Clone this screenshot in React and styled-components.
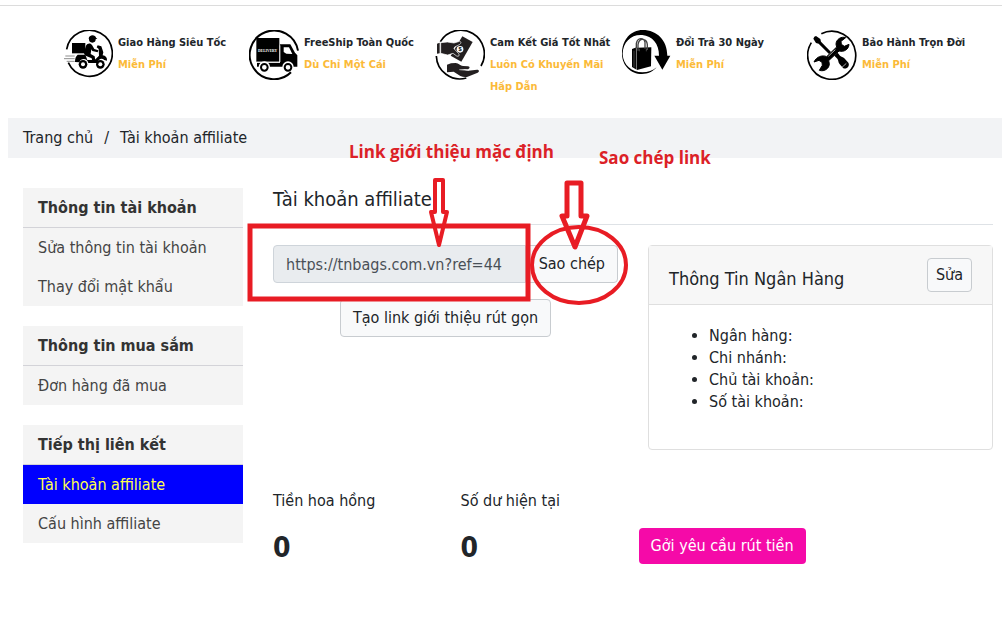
import React from 'react'
import styled, { createGlobalStyle } from 'styled-components'

const GlobalStyle = createGlobalStyle`
    *, *::before, *::after {
        box-sizing: border-box;
    }
    body {
        margin: 0;
        background: #fff;
        color: #212529;
        font-family: "DejaVu Sans Condensed", "DejaVu Sans", sans-serif;
        font-size: 16px;
        line-height: 22px;
    }
    button, input {
        font: inherit;
    }
`

const Page = styled.div`
    position: relative;
    padding: 5px 0 24px 8px;
`
const TopLine = styled.hr`
    margin: 0 0 24px -8px;
    border: 0;
    border-top: 1px solid #dcdcdc;
`

const Features = styled.section`
    display: grid;
    grid-template-columns: repeat(5, 1fr);
    padding: 0 9px 0 55px;
    margin-bottom: 20px;
`
const Feature = styled.div`
    display: flex;
    gap: 5px;
    padding-right: 8px;
`
const FeatureIcon = styled.svg`
    flex: none;
    width: 50px;
    height: 50px;
`
const FeatureText = styled.div`
    padding-top: 2px;
    font-size: 11px;
    font-weight: bold;
`
const FeatureTitle = styled.div`
    white-space: nowrap;
`
const FeatureNote = styled.div`
    color: #fbba39;
`

const Breadcrumb = styled.nav`
    display: flex;
    gap: 11px;
    padding: 9px 15px;
    background: #f2f3f5;
`
const Crumb = styled.a`
    color: #212529;
    text-decoration: none;
`

const Columns = styled.div`
    display: grid;
    grid-template-columns: 220px minmax(0, 1fr);
    gap: 30px;
    padding: 30px 9px 0 15px;
`
const Sidebar = styled.aside`
    display: flex;
    flex-direction: column;
    gap: 20px;
`
const MenuGroup = styled.section`
    background: #f4f4f4;
`
const MenuTitle = styled.h2`
    margin: 0;
    padding: 9px 15px 8px;
    border-bottom: 1px solid #d3d3d8;
    color: #333;
    font-size: 16px;
    font-weight: bold;
`
const MenuLink = styled.a`
    display: block;
    padding: 9px 15px 8px;
    text-decoration: none;
    color: ${(props) => (props.$active ? '#ffff4d' : '#444')};
    background: ${(props) => (props.$active ? '#0000ff' : 'transparent')};
`

const Title = styled.h1`
    margin: 0 0 20px;
    padding-bottom: 14px;
    border-bottom: 1px solid #dee2e6;
    font-size: 20px;
    font-weight: normal;
    line-height: 22px;
`
const Panels = styled.div`
    display: grid;
    grid-template-columns: 1fr 1fr;
    align-items: start;
    gap: 30px;
    margin-bottom: 40px;
`
const LinkBox = styled.div`
    display: flex;
    flex-direction: column;
    align-items: center;
    gap: 16px;
`
const CopyRow = styled.div`
    display: flex;
    width: 100%;
`
const LinkInput = styled.input`
    flex: 1;
    min-width: 0;
    height: 38px;
    padding: 0 12px;
    border: 1px solid #ced4da;
    border-radius: 4px 0 0 4px;
    background: #e9ecef;
    color: #495057;
`
const Button = styled.button`
    padding: ${(props) => (props.$small ? '5px 8px' : '7px 12px')};
    border: 1px solid #c8ccd0;
    border-radius: ${(props) => (props.$joined ? '0 4px 4px 0' : '4px')};
    background: #f8f9fa;
    color: #212529;
    white-space: nowrap;
`

const Card = styled.section`
    border: 1px solid #dfdfdf;
    border-radius: 4px;
`
const CardHead = styled.header`
    display: flex;
    justify-content: space-between;
    align-items: flex-start;
    padding: 12px 20px;
    border-bottom: 1px solid #dfdfdf;
    background: #f7f7f7;
`
const CardTitle = styled.h2`
    margin: 0;
    padding-top: 10px;
    font-size: 18px;
    font-weight: normal;
    line-height: 22px;
`
const BankList = styled.ul`
    margin: 20px 20px 36px;
    padding-left: 40px;
`

const Stats = styled.div`
    display: grid;
    grid-template-columns: repeat(4, minmax(0, 1fr));
    gap: 30px;
`
const StatValue = styled.div`
    margin-top: 20px;
    font-size: 28px;
    font-weight: bold;
    line-height: 32px;
`
const Withdraw = styled.button`
    align-self: end;
    justify-self: end;
    padding: 7px 12px;
    border: 0;
    border-radius: 4px;
    background: #f50aa8;
    color: #fff;
    white-space: nowrap;
`

/* red guide marks drawn over the page */
const Marks = styled.svg`
    position: absolute;
    left: 240px;
    top: 170px;
    width: 400px;
    height: 140px;
    fill: none;
    stroke: #e81c24;
    pointer-events: none;
`
const Note = styled.div`
    position: absolute;
    left: ${(props) => props.$x}px;
    top: ${(props) => props.$y}px;
    color: #dc2127;
    font-family: "Open Sans", "Noto Sans", sans-serif;
    font-size: 17px;
    font-weight: bold;
    line-height: 24px;
    white-space: nowrap;
`

const ScooterIcon = () => (
    <FeatureIcon viewBox="39 30 150 150" aria-hidden="true">
        <path d="M50 88A69 69 0 1 1 55 128" fill="none" stroke="#000" strokeWidth="5" />
        <path d="M46 108h28M42 116h32M50 124h24" stroke="#555" strokeWidth="2" />
        <path d="M66 69h40v31H66z" />
        <circle cx="127" cy="58" r="10" />
        <path d="M116 57c0-15 21-14 22-4l4 4z" />
        <path d="M108 77c4-8 14-9 18-2l7 12 12 4-2 6-16-4-3-5-2 14 12 7 3 20h-9l-3-14-18-8c-5-3-6-8-4-14z" />
        <path d="M73 104h33l6 16h22l13-13-1-20-6-5 3-6 11 3 6 18-2 9c9 1 14 7 13 16l-8-2c-8-8-18-4-21 9h-27c-2-14-22-17-27-2l-13-1c0-10 2-17 8-22z" />
        <circle cx="99" cy="133" r="13" />
        <circle cx="151" cy="133" r="13" />
        <circle cx="99" cy="133" r="6" fill="#fff" />
        <circle cx="151" cy="133" r="6" fill="#fff" />
    </FeatureIcon>
)

const TruckIcon = () => (
    <FeatureIcon viewBox="27 30 150 150" aria-hidden="true">
        <path d="M174 92A73 73 0 1 0 153 157" fill="none" stroke="#000" strokeWidth="6" />
        <path d="M49 54h69v71H49z" />
        <path d="M51 128h69V73h31l14 25 7 8v34H51z" />
        <path d="M131 82h16l10 20-18-1-8-5z" fill="#fff" />
        <path d="M120 76v50M51 127h69" stroke="#fff" strokeWidth="2" />
        <text x="83" y="95" fill="#fff" fontSize="11" fontWeight="bold" textAnchor="middle" fontFamily="Liberation Serif, serif">DELIVERY</text>
        <path d="M56 141a17 17 0 0 1 34 0M127 141a17 17 0 0 1 34 0" fill="#fff" />
        <circle cx="73" cy="142" r="10" fill="#fff" stroke="#000" strokeWidth="6" />
        <circle cx="144" cy="142" r="10" fill="#fff" stroke="#000" strokeWidth="6" />
    </FeatureIcon>
)

const CashIcon = () => (
    <FeatureIcon viewBox="30 30 150 150" aria-hidden="true">
        <path d="M46 65A71 71 0 0 1 168 138M34 108A71 71 0 0 0 124 174" fill="none" stroke="#000" strokeWidth="5" />
        <path d="M112 49l31 17-34 59-32-18z" fill="#231f20" />
        <path d="M36 71l8-3v32l-8 1z" fill="#231f20" />
        <path d="M47 68l20-2 20 3 17-5c6 1 4 7-1 10l-14 7-2 5 14 15c4 5 0 10-6 7l-11-8-16 5-21-5z" fill="#231f20" stroke="#fff" strokeWidth="2" />
        <circle cx="105" cy="88" r="10" fill="#fff" />
        <text x="105" y="94" fontSize="17" fontWeight="bold" textAnchor="middle" fontFamily="Liberation Sans, sans-serif">$</text>
        <path d="M66 134l12-4 14-1c9 0 14 9 22 9l15 1c7 1 6 9-2 9l-22-1 25 5 26-3c7 0 8 6 2 9l-30 12c-7 2-15 1-22-2l-20-13-20 2z" fill="#231f20" />
        <path d="M103 149l24 2c5 0 7-3 6-6" fill="none" stroke="#fff" strokeWidth="2" />
    </FeatureIcon>
)

const ReturnIcon = () => (
    <FeatureIcon viewBox="33 30 150 150" aria-hidden="true">
        <path d="M98 30c44 0 74 32 74 77h9l-24 42-24-42h14c0-36-20-59-50-62C65 42 39 65 38 101c1 35 28 55 59 56 17 0 31-5 43-15-11 13-26 20-44 20-34 0-60-26-60-61 0-42 27-71 62-71z" />
        <path d="M81 83l43-1-1 57-42 11z" />
        <path d="M80 82l-14 5v54l14 8z" />
        <path d="M84 92V74c3-22 26-20 28 0v16M79 86V70c4-18 22-18 26-3v19" fill="none" stroke="#444" strokeWidth="4" />
        <path d="M88 86v8M109 86v8M79 84v66M72 92v50" stroke="#ccc" strokeWidth="1" />
    </FeatureIcon>
)

const ToolsIcon = () => (
    <FeatureIcon viewBox="21 30 150 150" aria-hidden="true">
        <path d="M64 41A72 72 0 1 1 34 68" fill="none" stroke="#000" strokeWidth="5" />
        <path d="M43 50l5-2 13 9 2 8 30 31-6 6-31-31-8-2-8-13z" />
        <path d="M103 107l10-9 7 9c4 3 9 4 13 8l12 13c6 10-6 22-16 16l-11-13c-4-5-2-10-6-15z" />
        <path d="M137 53c-13-5-29 5-29 20l2 8-30 29c-13-6-31 0-38 16l15-5 9 6 1 9-9 15c16 5 30-6 30-20l-2-9 31-29c14 4 29-4 30-20l-14 6-9-6-1-9z" stroke="#000" strokeWidth="3" strokeLinejoin="round" />
        <path d="M126 142l13-12M85 109l21-20" stroke="#fff" strokeWidth="2" />
    </FeatureIcon>
)

const features = [
    { icon: ScooterIcon, title: 'Giao Hàng Siêu Tốc', note: 'Miễn Phí' },
    { icon: TruckIcon, title: 'FreeShip Toàn Quốc', note: 'Dù Chỉ Một Cái' },
    { icon: CashIcon, title: 'Cam Kết Giá Tốt Nhất', note: 'Luôn Có Khuyến Mãi Hấp Dẫn' },
    { icon: ReturnIcon, title: 'Đổi Trả 30 Ngày', note: 'Miễn Phí' },
    { icon: ToolsIcon, title: 'Bảo Hành Trọn Đời', note: 'Miễn Phí' },
]

const menu = [
    { title: 'Thông tin tài khoản', links: ['Sửa thông tin tài khoản', 'Thay đổi mật khẩu'] },
    { title: 'Thông tin mua sắm', links: ['Đơn hàng đã mua'] },
    { title: 'Tiếp thị liên kết', links: ['Tài khoản affiliate', 'Cấu hình affiliate'] },
]

const bankFields = ['Ngân hàng:', 'Chi nhánh:', 'Chủ tài khoản:', 'Số tài khoản:']

const stats = [
    { label: 'Tiền hoa hồng', value: 0 },
    { label: 'Số dư hiện tại', value: 0 },
]

const App = () => {
    const active = 'Tài khoản affiliate'
    const link = 'https://tnbags.com.vn?ref=44'

    return (
        <Page>
            <GlobalStyle />
            <TopLine />
            <Features>
                {features.map(({ icon: Icon, title, note }) => (
                    <Feature key={title}>
                        <Icon />
                        <FeatureText>
                            <FeatureTitle>{title}</FeatureTitle>
                            <FeatureNote>{note}</FeatureNote>
                        </FeatureText>
                    </Feature>
                ))}
            </Features>

            <Breadcrumb>
                <Crumb href="#">Trang chủ</Crumb>
                <span>/</span>
                <span>{active}</span>
            </Breadcrumb>

            <Columns>
                <Sidebar>
                    {menu.map((group) => (
                        <MenuGroup key={group.title}>
                            <MenuTitle>{group.title}</MenuTitle>
                            {group.links.map((name) => (
                                <MenuLink key={name} href="#" $active={name === active}>{name}</MenuLink>
                            ))}
                        </MenuGroup>
                    ))}
                </Sidebar>

                <main>
                    <Title>{active}</Title>
                    <Panels>
                        <LinkBox>
                            <CopyRow>
                                <LinkInput aria-label="Link giới thiệu" readOnly value={link} />
                                <Button type="button" $joined onClick={() => navigator.clipboard?.writeText(link)}>Sao chép</Button>
                            </CopyRow>
                            <Button type="button">Tạo link giới thiệu rút gọn</Button>
                        </LinkBox>
                        <Card>
                            <CardHead>
                                <CardTitle>Thông Tin Ngân Hàng</CardTitle>
                                <Button type="button" $small>Sửa</Button>
                            </CardHead>
                            <BankList>
                                {bankFields.map((field) => <li key={field}>{field}</li>)}
                            </BankList>
                        </Card>
                    </Panels>
                    <Stats>
                        {stats.map((stat) => (
                            <div key={stat.label}>
                                <div>{stat.label}</div>
                                <StatValue>{stat.value}</StatValue>
                            </div>
                        ))}
                        <Withdraw type="button">Gởi yêu cầu rút tiền</Withdraw>
                    </Stats>
                </main>
            </Columns>

            <Marks viewBox="240 170 400 140" aria-hidden="true">
                <rect x="250" y="226" width="278" height="73" strokeWidth="5" />
                <ellipse cx="579" cy="265" rx="47" ry="38" strokeWidth="4" />
                <path d="M435 180h8v32h4l-8 33-8-33h4z" strokeWidth="4" strokeLinejoin="round" />
                <path d="M567 183h14v33h6l-12 31-13-31h5z" strokeWidth="5" strokeLinejoin="round" />
            </Marks>
            <Note $x={349} $y={140}>Link giới thiệu mặc định</Note>
            <Note $x={599} $y={146}>Sao chép link</Note>
        </Page>
    )
}

export default App
